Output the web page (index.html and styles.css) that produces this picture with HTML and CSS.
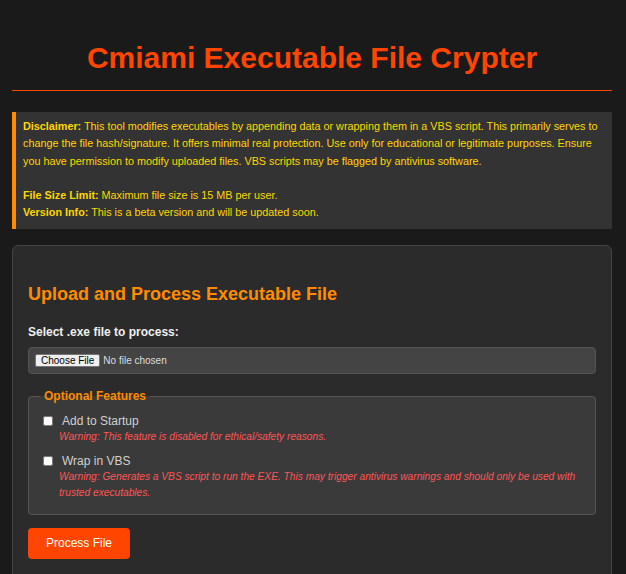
FILE: index.html
```html
<!DOCTYPE html>
<html lang="en">
<head>
<meta charset="utf-8">
<title>Cmiami Executable File Crypter</title>
<link rel="stylesheet" href="styles.css">
</head>
<body>
<div class="container">
  <header class="header">
    <h1 class="title">Cmiami Executable File Crypter</h1>
  </header>

  <div class="disclaimer">
    <p><strong>Disclaimer:</strong> This tool modifies executables by appending data or wrapping them in a VBS script. This primarily serves to change the file hash/signature. It offers minimal real protection. Use only for educational or legitimate purposes. Ensure you have permission to modify uploaded files. VBS scripts may be flagged by antivirus software.</p>
    <p><strong>File Size Limit:</strong> Maximum file size is 15 MB per user.<br><strong>Version Info:</strong> This is a beta version and will be updated soon.</p>
  </div>

  <div class="card">
    <h2 class="card-title">Upload and Process Executable File</h2>
    <form class="form" onsubmit="return false">
      <label class="field-label" for="exe">Select .exe file to process:</label>
      <input class="file-input" type="file" id="exe" accept=".exe">

      <fieldset class="options">
        <legend class="options-legend">Optional Features</legend>
        <div class="option">
          <div class="option-row">
            <input class="check" type="checkbox" id="startup">
            <label class="option-label" for="startup">Add to Startup</label>
          </div>
          <small class="warning">Warning: This feature is disabled for ethical/safety reasons.</small>
        </div>
        <div class="option option-next">
          <div class="option-row">
            <input class="check" type="checkbox" id="vbs">
            <label class="option-label" for="vbs">Wrap in VBS</label>
          </div>
          <small class="warning">Warning: Generates a VBS script to run the EXE. This may trigger antivirus warnings and should only be used with trusted executables.</small>
        </div>
      </fieldset>

      <button class="submit" type="submit">Process File</button>
    </form>
  </div>
</div>
</body>
</html>
```

FILE: styles.css
```css
* {
  box-sizing: border-box;
}

body {
  margin: 0;
  background: #1a1a1a;
  color: #e0e0e0;
  font-family: "Liberation Sans", Arial, sans-serif;
  line-height: 1.6;
}

.container {
  max-width: 600px;
  margin: 0 12px;
}

.header {
  padding: 40px 0 14px;
  border-bottom: 1px solid #ff4500;
  text-align: center;
}

.title {
  margin: 0;
  font-size: 30px;
  line-height: 36px;
  font-weight: bold;
  color: #ff4500;
}

.disclaimer {
  margin-top: 21px;
  padding: 6px 8px 7px 7px;
  background: #333333;
  border-left: 4px solid #ff8c00;
  color: #ffd700;
  font-size: 10.8px;
  line-height: 17.28px;
}

.disclaimer p {
  margin: 0;
}

.disclaimer p + p {
  margin-top: 17.28px;
}

.card {
  margin-top: 16px;
  padding: 15px;
  background: #2b2b2b;
  border: 1px solid #444444;
  border-radius: 6px;
  min-height: 360px;
}

.card-title {
  margin: 19px 0 15px;
  font-size: 18px;
  line-height: 28px;
  color: #ff8c00;
}

.form {
  display: flex;
  flex-direction: column;
  align-items: flex-start;
}

.field-label {
  display: block;
  margin-bottom: 5px;
  font-size: 12px;
  line-height: 19px;
  font-weight: bold;
  color: #f0f0f0;
}

.file-input {
  align-self: stretch;
  margin: 0 0 13px;
  padding: 6px;
  background: #444444;
  border: 1px solid #555555;
  border-radius: 4px;
  color: #dddddd;
  font-family: "Liberation Sans", Arial, sans-serif;
  font-size: 10px;
  line-height: 13px;
}

.file-input::file-selector-button {
  margin-right: 3px;
  padding: 0 5px;
  height: 13px;
  font-family: "Liberation Sans", Arial, sans-serif;
  font-size: 10px;
  line-height: 11px;
  color: #000000;
  background: #efefef;
  border: 1px solid #767676;
  border-radius: 2px;
}

.options {
  align-self: stretch;
  margin: 0;
  padding: 8px 15px 13px 11px;
  background: #3a3a3a;
  border: 1px solid #555555;
  border-radius: 4px;
}

.options-legend {
  padding: 0 4px;
  font-size: 12px;
  line-height: 19px;
  font-weight: bold;
  color: #ff8c00;
}

.option-next {
  margin-top: 9px;
}

.option-row {
  display: flex;
  align-items: center;
  height: 15px;
}

.check {
  width: 10px;
  height: 10px;
  margin: 0 9px 0 3px;
}

.option-label {
  font-size: 12px;
  line-height: 15px;
  color: #d0d0d0;
}

.warning {
  display: block;
  margin-left: 19px;
  font-size: 10.2px;
  line-height: 16px;
  font-style: italic;
  color: #ff5555;
}

.submit {
  margin-top: 13px;
  padding: 9px 18px;
  background: #ff4500;
  color: #ffffff;
  border: none;
  border-radius: 4px;
  font-family: "Liberation Sans", Arial, sans-serif;
  font-size: 12px;
  line-height: 13px;
  cursor: pointer;
}
```
